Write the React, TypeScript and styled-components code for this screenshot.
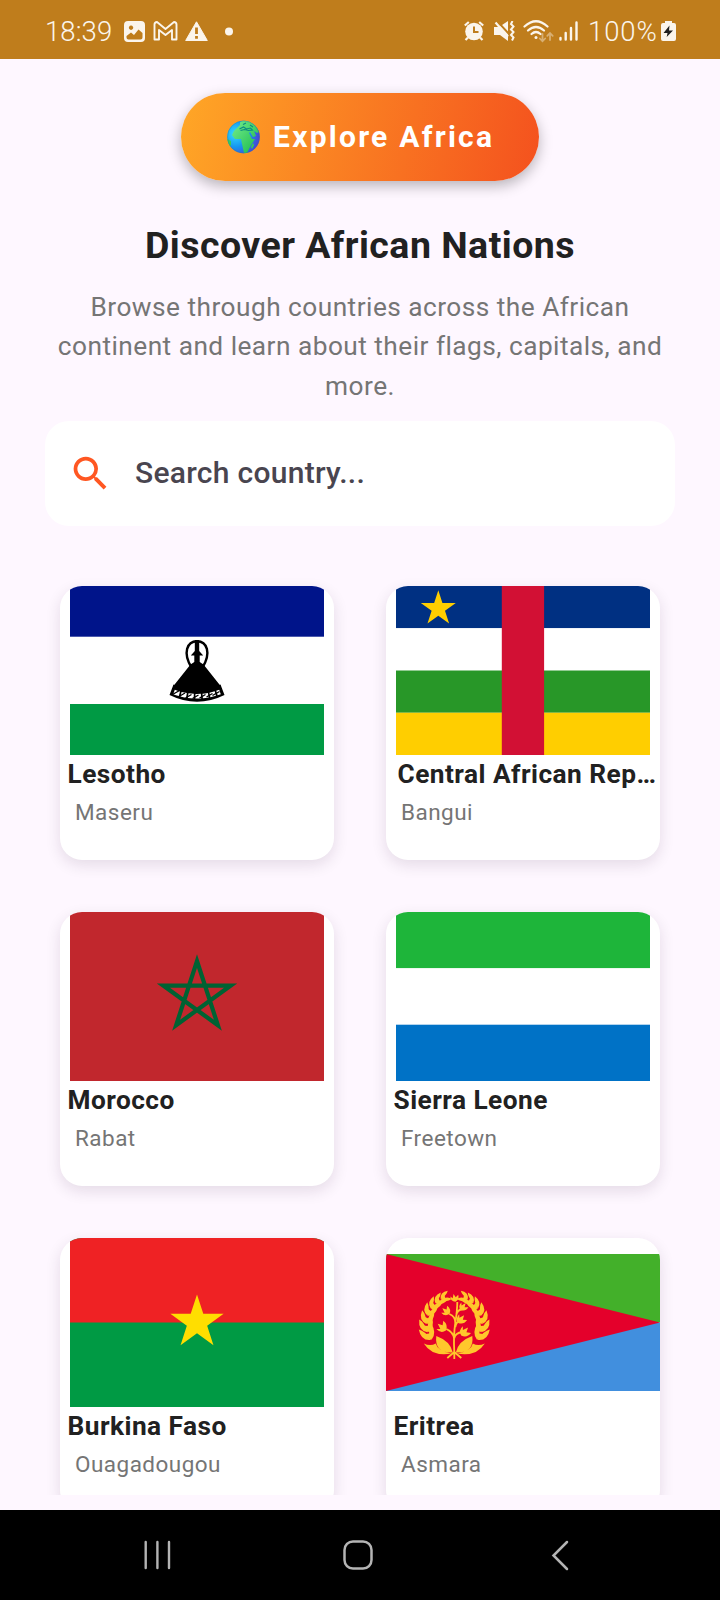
import React from "react";
import styled, { createGlobalStyle } from "styled-components";

const GlobalStyle = createGlobalStyle`
  * { box-sizing: border-box; }
  body { margin: 0; background: #fef7ff; font-family: Roboto, "Liberation Sans", sans-serif; }
  svg { display: block; }
`;

const Screen = styled.div`
  width: 720px;
  height: 1600px;
  display: flex;
  flex-direction: column;
  overflow: hidden;
  background: #fef7ff;
`;

const StatusBar = styled.header`
  height: 59px;
  flex: none;
  padding: 3px 44px 0 45px;
  display: flex;
  align-items: center;
  justify-content: space-between;
  background: #bf7d1c;
  color: #fbf5ec;
`;

const StatusGroup = styled.div`
  display: flex;
  align-items: center;
`;

const StatusText = styled.span<{ $width: number; $spacing: number; $gap?: number }>`
  width: ${(p) => p.$width}px;
  margin-left: ${(p) => p.$gap ?? 0}px;
  padding-top: 1px;
  font-size: 27.5px;
  font-weight: 350;
  line-height: 32px;
  letter-spacing: ${(p) => p.$spacing}px;
  white-space: nowrap;
`;

const StatusIcon = styled.svg<{ $gap: number }>`
  margin-left: ${(p) => p.$gap}px;
  flex: none;
`;

const Main = styled.main`
  flex: none;
  height: 1436px;
  overflow: hidden;
  display: flex;
  flex-direction: column;
  align-items: center;
  padding: 34px 45px 0;
`;

const ExploreButton = styled.button`
  width: 358px;
  height: 88px;
  flex: none;
  border: 0;
  border-radius: 44px;
  padding: 0 0 0 46px;
  display: flex;
  align-items: center;
  gap: 13px;
  background: linear-gradient(103.8deg, #ffa726, #f4511e);
  box-shadow: 0 5px 14px rgba(0, 0, 0, 0.28);
  color: #fff;
  font: 700 30px/36px Roboto, sans-serif;
  letter-spacing: 2.25px;
  white-space: nowrap;
`;

const Title = styled.h1`
  margin: 42px 0 0;
  font-size: 37.5px;
  line-height: 44px;
  font-weight: 700;
  letter-spacing: 0.47px;
  color: #212121;
  white-space: nowrap;
`;

const Description = styled.p`
  margin: 21px 0 0;
  font-size: 26.25px;
  line-height: 39.4px;
  letter-spacing: 0.47px;
  color: #757575;
  text-align: center;
`;

const SearchBox = styled.div`
  width: 630px;
  height: 105px;
  flex: none;
  margin-top: 15px;
  border-radius: 24px;
  background: #fff;
  display: flex;
  align-items: center;
  padding-left: 22.5px;
  gap: 22.5px;
`;

const SearchHint = styled.span`
  padding-bottom: 2px;
  color: #49454f;
  font-size: 30px;
  font-weight: 500;
  letter-spacing: 0.28px;
`;

const Grid = styled.section`
  flex: none;
  margin-top: 60px;
  display: grid;
  grid-template-columns: 274px 274px;
  grid-auto-rows: 274px;
  gap: 52px;
`;

const Card = styled.article`
  border-radius: 22px;
  background: #fff;
  box-shadow: 0 5px 15px rgba(40, 20, 50, 0.12);
  overflow: hidden;
`;

const FlagFrame = styled.div`
  height: 169px;
  display: flex;
  align-items: center;
  justify-content: center;
`;

const CountryName = styled.h2<{ $indent?: number }>`
  margin: 3px 0 0;
  padding-left: ${(p) => p.$indent ?? 7.5}px;
  font-size: 26.25px;
  line-height: 32px;
  font-weight: 700;
  letter-spacing: 0.47px;
  color: #212121;
  white-space: nowrap;
`;

const Capital = styled.p`
  margin: 9px 0 0;
  padding-left: 15px;
  font-size: 22.5px;
  line-height: 26px;
  letter-spacing: 0.47px;
  color: #757575;
`;

const NavBar = styled.nav`
  margin-top: 15px;
  height: 90px;
  flex: none;
  background: #000;
  display: flex;
  align-items: center;
  padding-left: 143px;
`;

const NavIcon = styled.svg<{ $gap?: number }>`
  flex: none;
  margin-left: ${(p) => p.$gap ?? 0}px;
`;

const starPoints = (cx: number, cy: number, r: number, inner = 0.382) =>
  Array.from({ length: 10 }, (_, i) => {
    const a = (-90 + i * 36) * (Math.PI / 180);
    const d = i % 2 ? r * inner : r;
    return `${(cx + d * Math.cos(a)).toFixed(2)},${(cy + d * Math.sin(a)).toFixed(2)}`;
  }).join(" ");

const pentagram = (cx: number, cy: number, r: number) =>
  [0, 2, 4, 1, 3]
    .map((i) => {
      const a = (-90 + i * 72) * (Math.PI / 180);
      return `${cx + r * Math.cos(a)},${cy + r * Math.sin(a)}`;
    })
    .join(" ");

const Globe = () => (
  <svg width="33" height="34" viewBox="0 0 33 34">
    <defs>
      <radialGradient id="sea" cx="0.25" cy="0.4" r="0.8">
        <stop offset="0" stopColor="#35dcff" />
        <stop offset="0.5" stopColor="#1595f0" />
        <stop offset="1" stopColor="#5136d0" />
      </radialGradient>
      <linearGradient id="land" x1="0" y1="0" x2="1" y2="1">
        <stop offset="0" stopColor="#77ed8d" />
        <stop offset="1" stopColor="#16b94a" />
      </linearGradient>
      <clipPath id="globe"><circle cx="16.5" cy="17" r="16.3" /></clipPath>
    </defs>
    <g clipPath="url(#globe)">
      <rect width="33" height="34" fill="url(#sea)" />
      <path d="M13 2l4-2 7 1 5 5 3 6-2 1-3-2 2 5-3 1-3-5-1 1 3 6 3 0-4 6-2 4-2 4-3 0-2-9-1-5-6 0-3-4 2-4 4-4 2-2z" fill="url(#land)" />
      <path d="M0 19l4 2 0 4-2 2-2-2zM26 23l1 2-2 4-1-2z" fill="#37cf52" />
      <path d="M12.500 9l4-2 3 2 4-1 2 2-4 .5-4-1-4 1M16 4.500l3-1.500M23 5l3 2" fill="none" stroke="#0b8b83" strokeWidth="1.100" />
    </g>
    <circle cx="16.500" cy="17" r="16" fill="none" stroke="#287f9c" strokeWidth="0.600" opacity="0.600" />
  </svg>
);

const Lesotho = () => (
  <svg width="254" height="169" viewBox="0 0 254 169">
    <rect width="254" height="169" fill="#fff" />
    <rect width="254" height="50.700" fill="#00148a" />
    <rect y="118" width="254" height="51" fill="#009a44" />
    <path d="M121.500 81.500C112.500 67 117 55.200 127 55.200s14.500 11.800 5.500 26.300" fill="none" stroke="#000" strokeWidth="2.400" />
    <path d="M124.800 54h4.400V65l4 4.500h-3.500V76l3.800 2.500L151 100.500q-24 10-48 0l17.500-22 3.800-2.500v-6.500h-3.500l4-4.500z" />
    <path d="M103.500 98.500Q127 109 150.500 98.500L154.500 109Q127 122.500 99.500 109z" />
    <path d="M104 106Q127 114.500 150 106" fill="none" stroke="#fff" strokeWidth="4.600" strokeDasharray="5.600 1.700" />
    <path d="M102.500 108.500l7-4M109 110.500l6-3.500M115.500 112l6-3.500M122.500 112.500l6-3.500M129.500 112l6-3.500M136.500 111l6-3.500M142.500 109.500l7-4" stroke="#000" strokeWidth="1.300" />
  </svg>
);

const CentralAfrica = () => (
  <svg width="254" height="169" viewBox="0 0 254 169">
    <rect width="254" height="42.250" fill="#003082" />
    <rect y="42.250" width="254" height="42.250" fill="#fff" />
    <rect y="84.500" width="254" height="42.250" fill="#289728" />
    <rect y="126.750" width="254" height="42.250" fill="#ffce00" />
    <rect x="105.800" width="42.300" height="169" fill="#d21034" />
    <polygon points={starPoints(42.3, 22.6, 18.4)} fill="#ffce00" />
  </svg>
);

const Morocco = () => (
  <svg width="254" height="169" viewBox="0 0 254 169">
    <rect width="254" height="169" fill="#c1272d" />
    <polygon points={pentagram(127, 84.5, 35.5)} fill="none" stroke="#006233" strokeWidth="4.200" strokeMiterlimit="10" />
  </svg>
);

const SierraLeone = () => (
  <svg width="254" height="169" viewBox="0 0 254 169">
    <rect width="254" height="56.300" fill="#1eb53a" />
    <rect y="56.300" width="254" height="56.400" fill="#fff" />
    <rect y="112.700" width="254" height="56.300" fill="#0072c6" />
  </svg>
);

const BurkinaFaso = () => (
  <svg width="254" height="169" viewBox="0 0 254 169">
    <rect width="254" height="169" fill="#009a44" />
    <rect width="254" height="84.500" fill="#ef2224" />
    <polygon points={starPoints(127, 84.5, 28)} fill="#ffde00" />
  </svg>
);

const WreathHalf = () => (
  <g>
    {[160, 176, 192, 208, 223, 237, 250].map((deg, i) => {
      const a = (deg * Math.PI) / 180;
      const size = 1.12 - i * 0.06;
      return (
        <g
          key={deg}
          transform={`translate(${27.5 * Math.cos(a)} ${28.5 * Math.sin(a)}) rotate(${deg - 180}) scale(${size})`}
        >
          <path d="M.2 6Q-8.500 4-6.800-6.500Q-2-3.500 .2 6zM.8 6Q7.500 2 5.500-8Q-.5-4 .8 6z" />
          <path d="M-5-1L.5 6 4.500-1 .5 0z" />
        </g>
      );
    })}
    <path d="M-2.500 28.500Q-20 29-18 12Q-4 17-1.500 28.500zM-3 29.500Q-22 33-30.500 19.500Q-24 22.500-18.500 19.500Q-17 27-3 29.500z" />
  </g>
);

const Bloom = ({ x, y, turn, size = 0.92 }: { x: number; y: number; turn: number; size?: number }) => (
  <path
    transform={`translate(${x} ${y}) rotate(${turn}) scale(${size})`}
    d="M0 5.500Q-6.500 4-6-3L-3 0-1-6 1.500-1 5.500-4Q6.500 3 0 5.500z"
  />
);

const Eritrea = () => (
  <svg width="274" height="137" viewBox="0 0 274 137">
    <rect width="274" height="68.500" fill="#43b02a" />
    <rect y="68.500" width="274" height="68.500" fill="#418fde" />
    <path d="M0 0L274 68.500 0 137z" fill="#e4002b" />
    <g transform="translate(68.300 70)" fill="#ffc72c">
      <WreathHalf />
      <g transform="scale(-1 1)"><WreathHalf /></g>
      <path d="M0 28Q-1 12 1-1T3-22M0 15Q-1 8-8 5M0 14Q1 9 8 8M1-1Q1-8-5-10M1 3Q2-2 6-4M2-9Q3-14 8-15M0 28L-7 34M0 28L7 34M0 28V35" fill="none" stroke="#ffc72c" strokeWidth="1.800" />
      <Bloom x={-12} y={3} turn={-45} />
      <Bloom x={10.500} y={8} turn={45} />
      <Bloom x={-8} y={-13} turn={-45} size={0.8} />
      <Bloom x={7} y={-4.500} turn={42} size={0.85} />
      <Bloom x={9} y={-17} turn={40} size={0.75} />
      <Bloom x={0.5} y={-26} turn={-8} size={0.7} />
    </g>
  </svg>
);

const countries = [
  { name: "Lesotho", capital: "Maseru", Flag: Lesotho },
  { name: "Central African Rep…", capital: "Bangui", Flag: CentralAfrica, indent: 11.5 },
  { name: "Morocco", capital: "Rabat", Flag: Morocco },
  { name: "Sierra Leone", capital: "Freetown", Flag: SierraLeone },
  { name: "Burkina Faso", capital: "Ouagadougou", Flag: BurkinaFaso },
  { name: "Eritrea", capital: "Asmara", Flag: Eritrea },
];

export default function App() {
  return (
    <>
      <GlobalStyle />
      <Screen>
        <StatusBar>
          <StatusGroup>
            <StatusText $width={67} $spacing={0.1}>18:39</StatusText>
            <StatusIcon $gap={12} width="21" height="21" viewBox="0 0 21 21" fill="currentColor">
              <path fillRule="evenodd" d="M4 0h13q4 0 4 4v13q0 4-4 4H4q-4 0-4-4V4q0-4 4-4zM7 4.500a2.200 2.200 0 1 0 .1 0zM2.500 15v1.500q0 2 2 2h12q2 0 2-2V12l-4-3.500-4.500 5.500-3-2.500z" />
            </StatusIcon>
            <StatusIcon $gap={8} width="25" height="20" viewBox="0 0 25 20" fill="none" stroke="currentColor" strokeWidth="1.900" strokeLinejoin="round">
              <path d="M2 18.500h4V9l6.500 5L19 9v9.500h4.500V3.500Q23.500 1 21 1L12.500 8 4 1Q1.500 1 1.500 3.500v15z" />
            </StatusIcon>
            <StatusIcon $gap={7} width="23" height="20" viewBox="0 0 23 20">
              <path d="M11.500 .8L22.300 19.500H.7z" fill="currentColor" stroke="currentColor" strokeLinejoin="round" />
              <path d="M11.500 6.500v6.500M11.500 15v2.800" stroke="#bf7d1c" strokeWidth="2.800" />
            </StatusIcon>
            <StatusIcon $gap={17} width="9" height="9" viewBox="0 0 9 9"><circle cx="4" cy="4.500" r="4" fill="currentColor" /></StatusIcon>
          </StatusGroup>
          <StatusGroup>
            <StatusIcon $gap={0} width="20" height="20" viewBox="0 0 20 20" fill="none" stroke="currentColor" strokeWidth="2.200">
              <circle cx="10" cy="10.500" r="8.800" fill="currentColor" stroke="none" />
              <path d="M.8 4.500L4.800 1M19.200 4.500L15.200 1M4 16.500L1.500 19M16 16.500L18.500 19" />
              <path d="M10 5.500v5.500h4.500" stroke="#bf7d1c" strokeWidth="2" />
            </StatusIcon>
            <StatusIcon $gap={10} width="21" height="20" viewBox="0 0 21 20" fill="none" stroke="currentColor" strokeWidth="2">
              <path d="M0 6h5l9-6v20l-8-6H0z" fill="currentColor" stroke="none" />
              <path d="M3.500 .5L15 13" stroke="#bf7d1c" strokeWidth="2" />
              <path d="M1.500 1.500L14 15.500" strokeWidth="2.200" />
              <path d="M18.500 0l-1.500 3 2.500 2.500-2.500 3 2.500 2.500-2.500 3 2.500 2.500-1.500 3" strokeWidth="2" />
            </StatusIcon>
            <StatusIcon $gap={8} width="31" height="23" viewBox="0 0 31 23" fill="none" stroke="currentColor" strokeWidth="2.200" strokeLinecap="round">
              <path d="M1.500 6.500Q13 -4 24.500 6.500M5 10.500Q13 3.500 21 10.500M8.500 14Q13 10 17.500 14" />
              <circle cx="13" cy="17.500" r="1.500" fill="currentColor" stroke="none" />
              <path d="M19.500 14v7M16.800 18.500l2.700 2.800 2.700-2.800M27 20v-7M24.300 15.800l2.700-2.800 2.700 2.800" opacity=".42" strokeWidth="1.800" />
            </StatusIcon>
            <StatusIcon $gap={5} width="19" height="20" viewBox="0 0 19 20" stroke="currentColor" strokeWidth="2.400" strokeLinecap="round">
              <path d="M1.500 17v1.500M6.700 12v6.500M12 7v11.500M17.500 1.500v17" />
            </StatusIcon>
            <StatusText $gap={10} $width={69} $spacing={0.9}>100%</StatusText>
            <StatusIcon $gap={4} width="15" height="20" viewBox="0 0 15 20">
              <path d="M4 2V0h7v2h2q2 0 2 2v14q0 2-2 2H2q-2 0-2-2V4q0-2 2-2z" fill="currentColor" />
              <path d="M8.500 4.500L2.500 12h4l-.8 4L12 9.500H8z" fill="#202020" />
            </StatusIcon>
          </StatusGroup>
        </StatusBar>
        <Main>
          <ExploreButton>
            <Globe />
            Explore Africa
          </ExploreButton>
          <Title>Discover African Nations</Title>
          <Description>
            Browse through countries across the African
            <br />
            continent and learn about their flags, capitals, and
            <br />
            more.
          </Description>
          <SearchBox>
            <svg width="45" height="45" viewBox="0 0 24 24" fill="#ff5722">
              <path d="M15.500 14h-.79l-.28-.27A6.471 6.471 0 0 0 16 9.500 6.500 6.500 0 1 0 9.500 16c1.610 0 3.090-.59 4.230-1.570l.27.280v.79l5 4.990L20.490 19l-4.990-5zm-6 0C7.010 14 5 11.990 5 9.500S7.010 5 9.500 5 14 7.010 14 9.500 11.990 14 9.500 14z" />
            </svg>
            <SearchHint>Search country...</SearchHint>
          </SearchBox>
          <Grid>
            {countries.map(({ name, capital, Flag, indent }) => (
              <Card key={name}>
                <FlagFrame><Flag /></FlagFrame>
                <CountryName $indent={indent}>{name}</CountryName>
                <Capital>{capital}</Capital>
              </Card>
            ))}
          </Grid>
        </Main>
        <NavBar>
          <NavIcon width="28" height="30" viewBox="0 0 28 30" stroke="#b4b4b4" strokeWidth="2.400" strokeLinecap="round">
            <path d="M2.700 2v26M14.400 2v26M26 2v26" />
          </NavIcon>
          <NavIcon $gap={172} width="30" height="30" viewBox="0 0 30 30" fill="none" stroke="#b4b4b4" strokeWidth="2.500">
            <rect x="1.500" y="1.500" width="27" height="27" rx="8.500" />
          </NavIcon>
          <NavIcon $gap={178} width="18" height="31" viewBox="0 0 18 31" fill="none" stroke="#b4b4b4" strokeWidth="2.500" strokeLinecap="round">
            <path d="M16 2L2.500 15.500 16 29" />
          </NavIcon>
        </NavBar>
      </Screen>
    </>
  );
}
